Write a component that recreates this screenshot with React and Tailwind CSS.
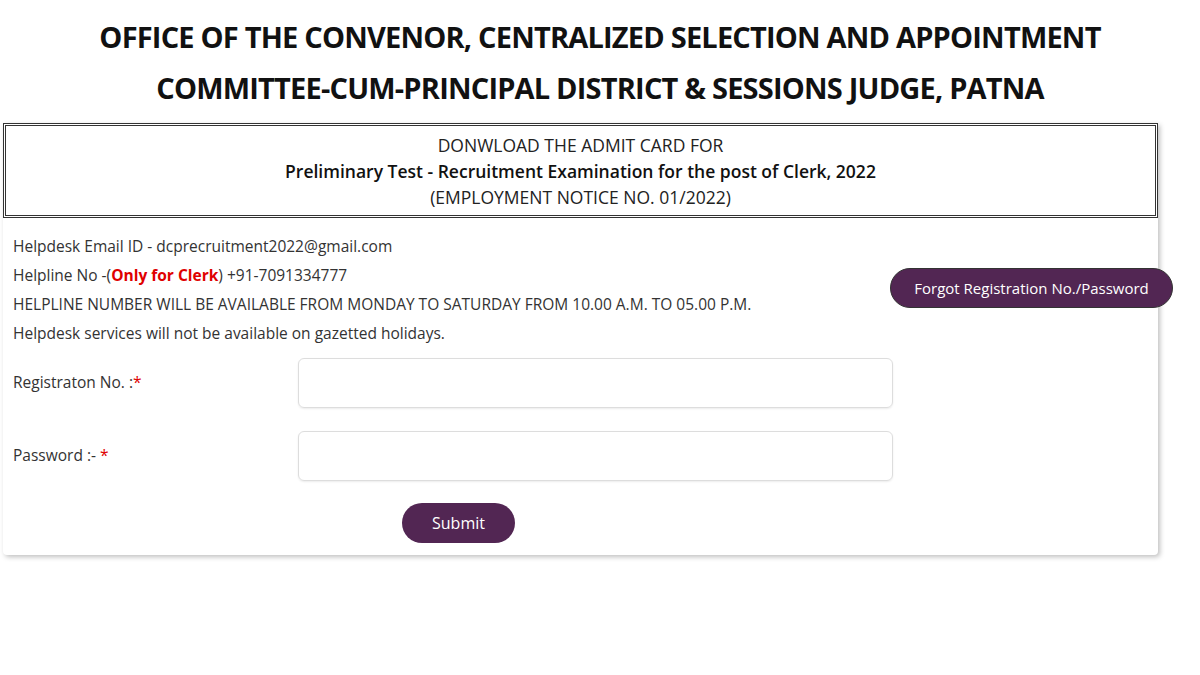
export default function App() {
  return (
    <div className="min-h-screen w-full bg-white text-[#222] font-['Open_Sans',sans-serif]">
      <div className="pt-[11px] pb-[10px] text-center">
        <h1 className="text-[29px] leading-[51px] font-bold tracking-[-0.8px] text-[#111]">
          OFFICE OF THE CONVENOR, CENTRALIZED SELECTION AND APPOINTMENT
          <br />
          COMMITTEE-CUM-PRINCIPAL DISTRICT &amp; SESSIONS JUDGE, PATNA
        </h1>
      </div>

      <div className="ml-[3px] w-[1155px] bg-white shadow-[2px_2px_5px_rgba(0,0,0,0.25)] rounded-b-[4px]">
        <div className="border-[3px] border-double border-[#333] h-[95px] flex flex-col items-center justify-center text-[17.5px] leading-[26px] text-[#222]">
          <p>DONWLOAD THE ADMIT CARD FOR</p>
          <p className="font-semibold text-[#111]">Preliminary Test - Recruitment Examination for the post of Clerk, 2022</p>
          <p>(EMPLOYMENT NOTICE NO. 01/2022)</p>
        </div>

        <div className="flex pl-[10px] pt-[14px]">
          <div className="w-[877px] shrink-0 text-[15.5px] leading-[29px] text-[#333]">
            <p>Helpdesk Email ID - dcprecruitment2022@gmail.com</p>
            <p>
              Helpline No -(<span className="font-bold text-[#e00000]">Only for Clerk</span>) +91-7091334777
            </p>
            <p>HELPLINE NUMBER WILL BE AVAILABLE FROM MONDAY TO SATURDAY FROM 10.00 A.M. TO 05.00 P.M.</p>
            <p>Helpdesk services will not be available on gazetted holidays.</p>
          </div>
          <div className="shrink-0 pt-[36px]">
            <button className="w-[283px] h-[40px] rounded-full bg-[#522653] text-white text-[15px] border border-[#333]">
              Forgot Registration No./Password
            </button>
          </div>
        </div>

        <div className="pl-[10px] pt-[10px] flex flex-col gap-[23px]">
          <div className="flex items-center">
            <label className="w-[285px] text-[15.5px] text-[#333]">
              Registraton No. :<span className="text-[#e00000]">*</span>
            </label>
            <input className="w-[595px] h-[50px] rounded-[6px] border border-[#ddd] shadow-[0_1px_2px_rgba(0,0,0,0.08)] outline-none px-3" />
          </div>
          <div className="flex items-center">
            <label className="w-[285px] text-[15.5px] text-[#333]">
              Password :- <span className="text-[#e00000]">*</span>
            </label>
            <input type="password" className="w-[595px] h-[50px] rounded-[6px] border border-[#ddd] shadow-[0_1px_2px_rgba(0,0,0,0.08)] outline-none px-3" />
          </div>
        </div>

        <div className="pl-[399px] pt-[22px] pb-[12px]">
          <button className="w-[113px] h-[40px] rounded-full bg-[#522653] text-white text-[16px]">
            Submit
          </button>
        </div>
      </div>
    </div>
  );
}
